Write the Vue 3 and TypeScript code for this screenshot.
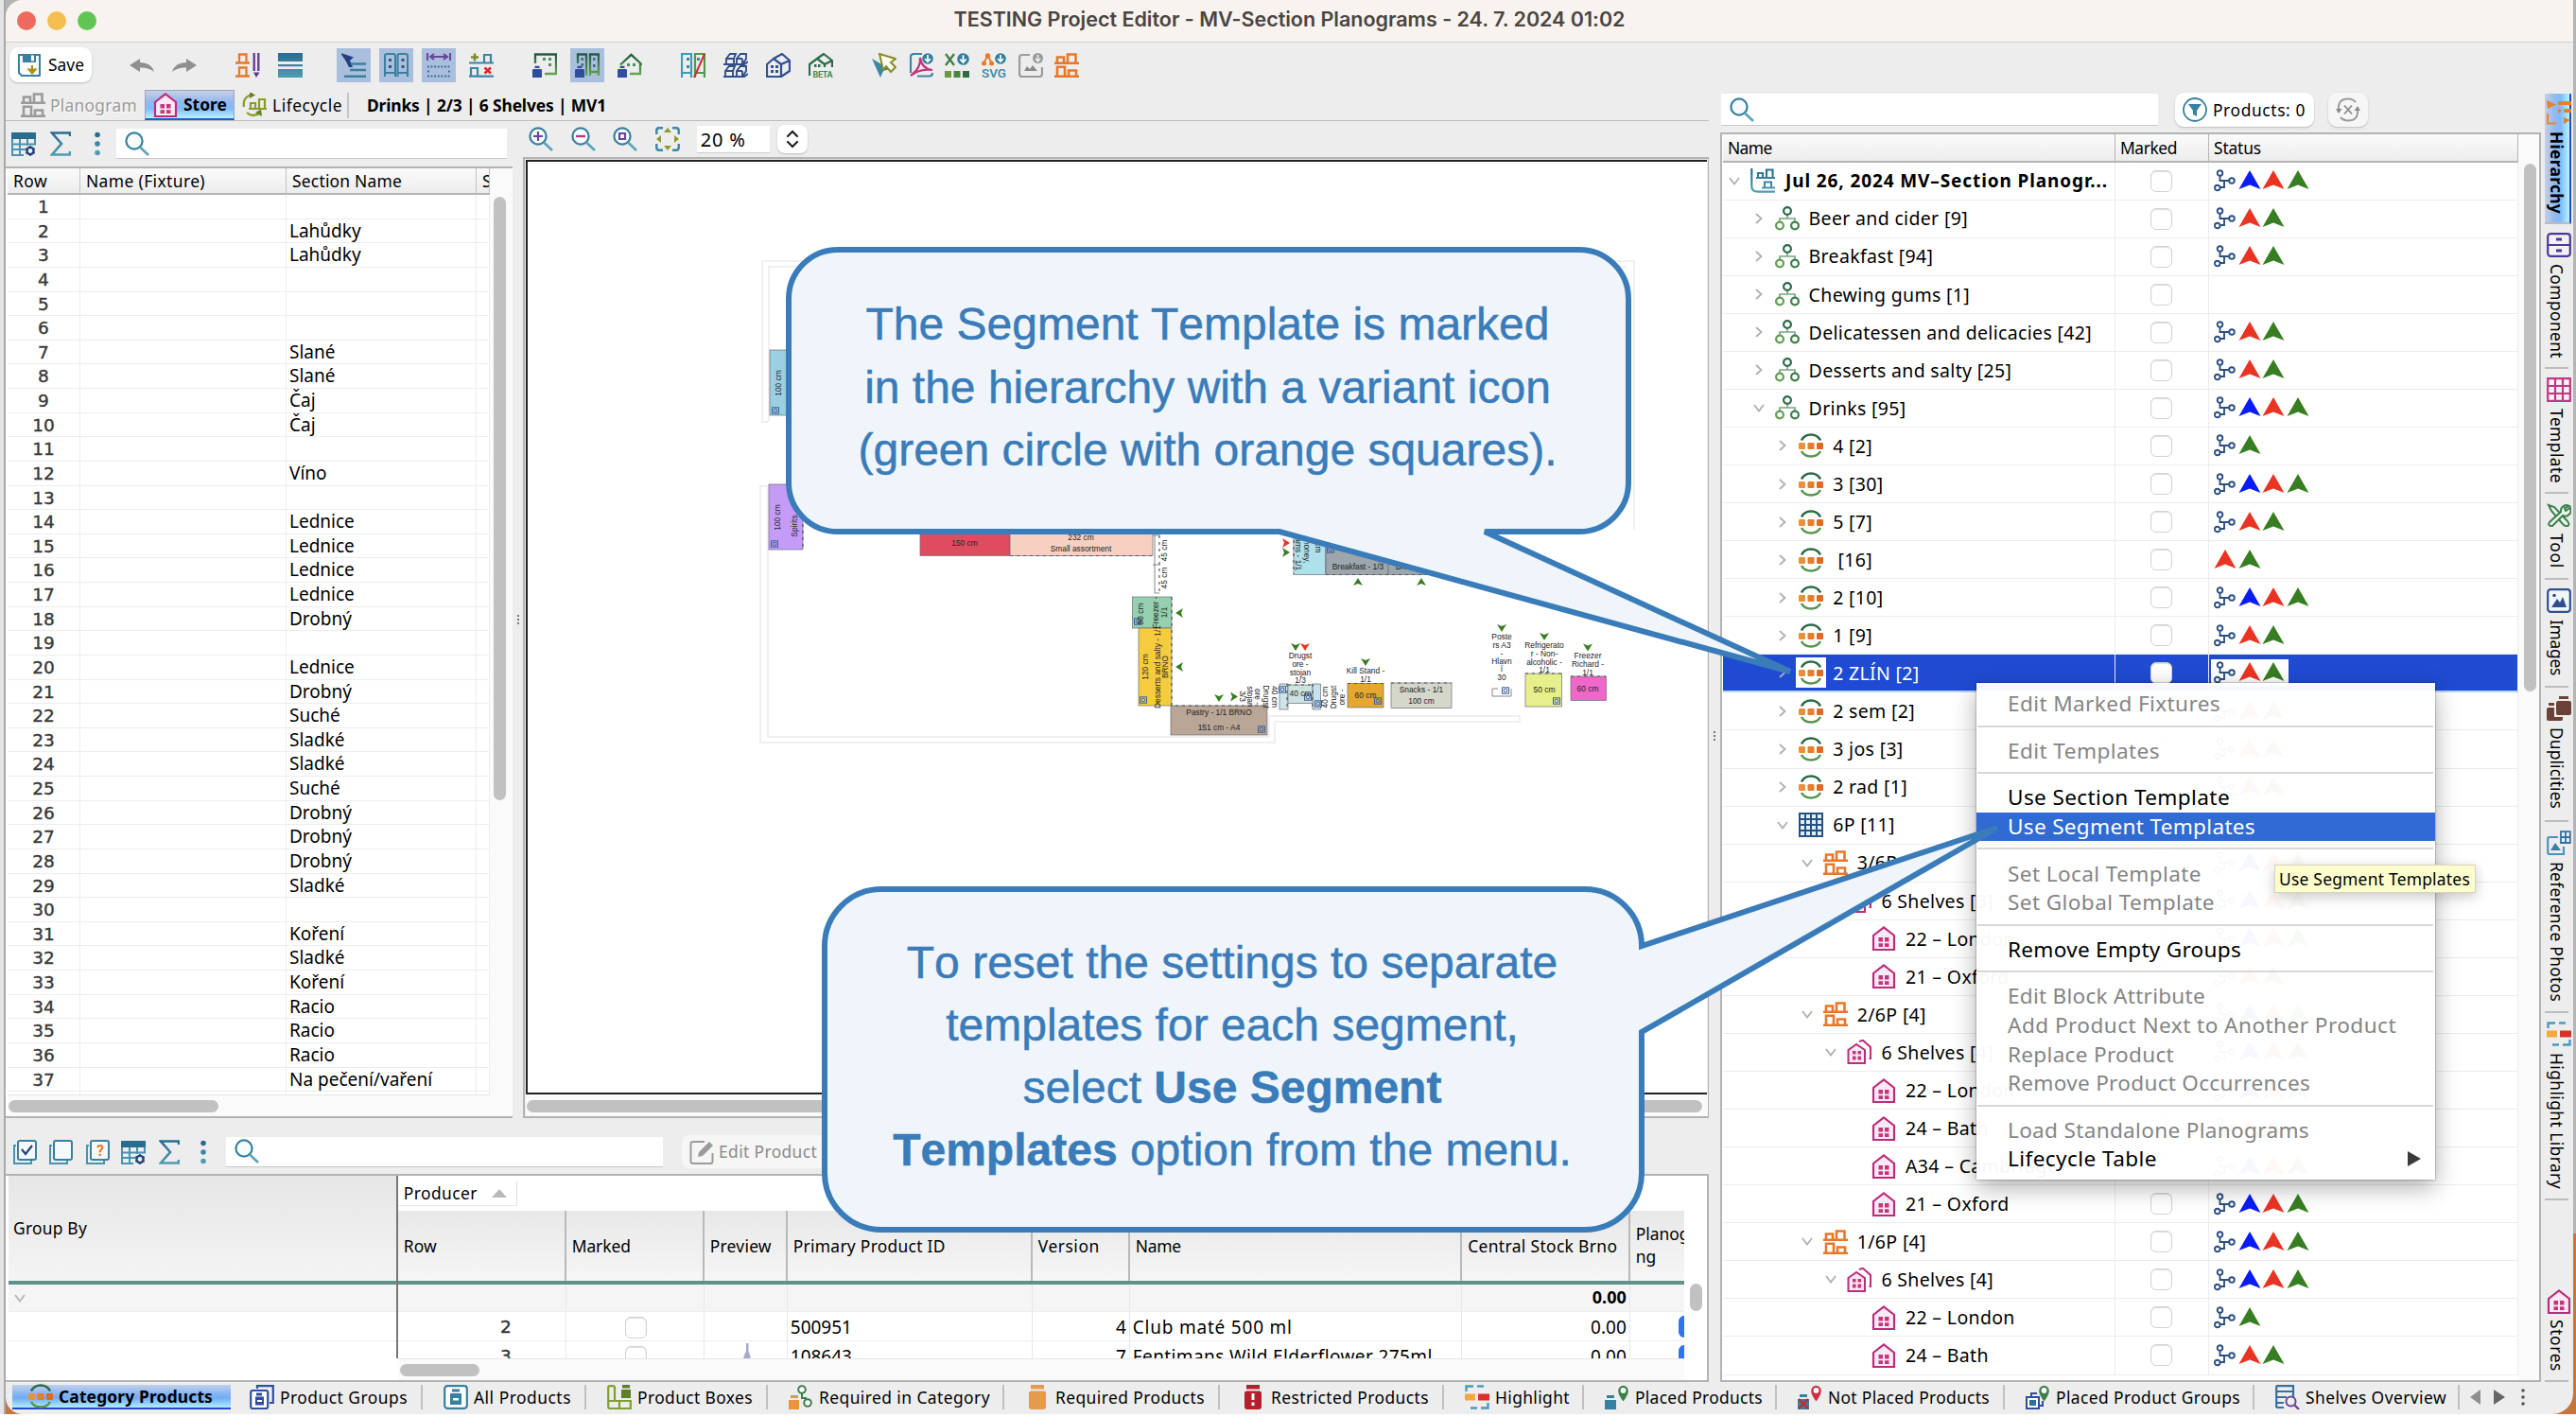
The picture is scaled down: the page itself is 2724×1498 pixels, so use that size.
<script setup lang="ts">
interface TreeRow { level: number; icon: string; text: string; open?: boolean; status: string; bold?: boolean; selected?: boolean }
interface Tab { icon: string; text: string; width: number; textWidth: number; active?: boolean }

// Spreads letters so that a label takes the width the design gives it.
const vFit = {
  mounted(el: HTMLElement, binding: { value: number }) {
    const box = el.getBoundingClientRect()
    const size = Math.max(box.width, box.height)
    const count = (el.textContent ?? '').length
    if (count) el.style.letterSpacing = `${(binding.value - size) / count}px`
  },
}

const toolGroups: { icon: string; on?: boolean }[][] = [
  [{ icon: 'undo' }, { icon: 'redo' }],
  [{ icon: 'shelfedit' }, { icon: 'rows' }],
  [{ icon: 'cursorlist', on: true }, { icon: 'cabinets', on: true }, { icon: 'measure', on: true }, { icon: 'plusminus' }],
  [{ icon: 'bottleshelf' }, { icon: 'bottlecab', on: true }, { icon: 'bottlehouse' }],
  [{ icon: 'compare' }, { icon: 'boxes3d' }, { icon: 'house3d' }, { icon: 'beta' }],
  [{ icon: 'select' }, { icon: 'pdf' }, { icon: 'xls' }, { icon: 'svg' }, { icon: 'image' }, { icon: 'shelf' }],
]

const sections: Record<number, string> = {
  2: 'Lahůdky', 3: 'Lahůdky', 7: 'Slané', 8: 'Slané', 9: 'Čaj', 10: 'Čaj', 12: 'Víno', 14: 'Lednice', 15: 'Lednice',
  16: 'Lednice', 17: 'Lednice', 18: 'Drobný', 20: 'Lednice', 21: 'Drobný', 22: 'Suché', 23: 'Sladké', 24: 'Sladké',
  25: 'Suché', 26: 'Drobný', 27: 'Drobný', 28: 'Drobný', 29: 'Sladké', 31: 'Koření', 32: 'Sladké', 33: 'Koření',
  34: 'Racio', 35: 'Racio', 36: 'Racio', 37: 'Na pečení/vaření',
}

const tree: TreeRow[] = [
  { level: 0, icon: 'project', text: 'Jul 26, 2024 MV–Section Planogr...', open: true, status: 'tbrg', bold: true },
  { level: 1, icon: 'category', text: 'Beer and cider [9]', open: false, status: 'trg' },
  { level: 1, icon: 'category', text: 'Breakfast [94]', open: false, status: 'trg' },
  { level: 1, icon: 'category', text: 'Chewing gums [1]', open: false, status: '' },
  { level: 1, icon: 'category', text: 'Delicatessen and delicacies [42]', open: false, status: 'trg' },
  { level: 1, icon: 'category', text: 'Desserts and salty [25]', open: false, status: 'trg' },
  { level: 1, icon: 'category', text: 'Drinks [95]', open: true, status: 'tbrg' },
  { level: 2, icon: 'variant', text: '4 [2]', open: false, status: 'tg' },
  { level: 2, icon: 'variant', text: '3 [30]', open: false, status: 'tbrg' },
  { level: 2, icon: 'variant', text: '5 [7]', open: false, status: 'trg' },
  { level: 2, icon: 'variant', text: ' [16]', open: false, status: 'rg' },
  { level: 2, icon: 'variant', text: '2 [10]', open: false, status: 'tbrg' },
  { level: 2, icon: 'variant', text: '1 [9]', open: false, status: 'trg' },
  { level: 2, icon: 'variant', text: '2 ZLÍN [2]', open: false, status: 'trg', selected: true },
  { level: 2, icon: 'variant', text: '2 sem [2]', open: false, status: 'trg' },
  { level: 2, icon: 'variant', text: '3 jos [3]', open: false, status: 'trg' },
  { level: 2, icon: 'variant', text: '2 rad [1]', open: false, status: 'trg' },
  { level: 2, icon: 'grid', text: '6P [11]', open: true, status: 'tbrg' },
  { level: 3, icon: 'shelf', text: '3/6P [3]', open: true, status: 'tbrg' },
  { level: 4, icon: 'houses', text: '6 Shelves [3]', open: true, status: 'tbrg' },
  { level: 5, icon: 'house', text: '22 – London', status: 'tbrg' },
  { level: 5, icon: 'house', text: '21 – Oxford', status: 'trg' },
  { level: 3, icon: 'shelf', text: '2/6P [4]', open: true, status: 'tbrg' },
  { level: 4, icon: 'houses', text: '6 Shelves [4]', open: true, status: 'tbrg' },
  { level: 5, icon: 'house', text: '22 – London', status: 'tbrg' },
  { level: 5, icon: 'house', text: '24 – Bath', status: 'trg' },
  { level: 5, icon: 'house', text: 'A34 – Cambridge', status: 'tbrg' },
  { level: 5, icon: 'house', text: '21 – Oxford', status: 'tbrg' },
  { level: 3, icon: 'shelf', text: '1/6P [4]', open: true, status: 'tbrg' },
  { level: 4, icon: 'houses', text: '6 Shelves [4]', open: true, status: 'tbrg' },
  { level: 5, icon: 'house', text: '22 – London', status: 'tg' },
  { level: 5, icon: 'house', text: '24 – Bath', status: 'trg' },
]
const arrowColor: Record<string, string> = { b: '#0a1cf5', r: '#ea3423', g: '#377e22' }

const tabs: Tab[] = [
  { icon: 'variant', text: 'Category Products', width: 235, textWidth: 163, active: true },
  { icon: 'groups', text: 'Product Groups', width: 200, textWidth: 135 },
  { icon: 'product', text: 'All Products', width: 173, textWidth: 103 },
  { icon: 'pboxes', text: 'Product Boxes', width: 192, textWidth: 122 },
  { icon: 'reqcat', text: 'Required in Category', width: 250, textWidth: 181 },
  { icon: 'required', text: 'Required Products', width: 228, textWidth: 158 },
  { icon: 'restricted', text: 'Restricted Products', width: 237, textWidth: 167 },
  { icon: 'highlight', text: 'Highlight', width: 148, textWidth: 79 },
  { icon: 'placed', text: 'Placed Products', width: 204, textWidth: 135 },
  { icon: 'notplaced', text: 'Not Placed Products', width: 241, textWidth: 171 },
  { icon: 'placedgroups', text: 'Placed Product Groups', width: 264, textWidth: 195 },
  { icon: 'overview', text: 'Shelves Overview', width: 217, textWidth: 149 },
]

const sideTabs: Tab[] = [
  { icon: 'hierarchy', text: 'Hierarchy', width: 138, textWidth: 87, active: true },
  { icon: 'component', text: 'Component', width: 153, textWidth: 100 },
  { icon: 'template', text: 'Template', width: 132, textWidth: 79 },
  { icon: 'tool', text: 'Tool', width: 91, textWidth: 37 },
  { icon: 'images', text: 'Images', width: 114, textWidth: 59 },
  { icon: 'dup', text: 'Duplicities', width: 142, textWidth: 86 },
  { icon: 'photos', text: 'Reference Photos', width: 202, textWidth: 148 },
  { icon: 'highlight', text: 'Highlight Library', width: 198, textWidth: 144 },
]

const menu: { text?: string; w?: number; state?: string }[] = [
  { text: 'Edit Marked Fixtures', w: 225, state: 'off' }, {},
  { text: 'Edit Templates', w: 161, state: 'off' }, {},
  { text: 'Use Section Template', w: 235 }, { text: 'Use Segment Templates', w: 262, state: 'hot' }, {},
  { text: 'Set Local Template', w: 205, state: 'off' }, { text: 'Set Global Template', w: 219, state: 'off' }, {},
  { text: 'Remove Empty Groups', w: 247 }, {},
  { text: 'Edit Block Attribute', w: 209, state: 'off' }, { text: 'Add Product Next to Another Product', w: 411, state: 'off' },
  { text: 'Replace Product', w: 176, state: 'off' }, { text: 'Remove Product Occurrences', w: 320, state: 'off' }, {},
  { text: 'Load Standalone Planograms', w: 319, state: 'off' }, { text: 'Lifecycle Table', w: 158, state: 'sub' },
]

// Store floor plan: fixtures, labels (x, y, text, rotation) and direction arrows (x, y, rotation, colour).
const fixtures: [number, number, number, number, string][] = [
  [814, 370, 40, 69, '#9bd0e3'], [813, 512, 36, 69, '#c49cf8'], [973, 550, 95, 37.5, '#df4c60'], [1068, 550, 151, 37.5, '#f8d0c1'],
  [1197.5, 631, 41.5, 33, '#95d1b0'], [1204, 664, 35, 82, '#f6cc3f'], [1238, 746, 102, 31, '#b9a696'],
  [1353, 723, 9, 27, '#cfe6e8'], [1388, 723, 8.5, 27, '#c6e2ea'], [1362, 724, 26, 19.5, '#cbe2de'],
  [1425, 722.5, 38, 25.5, '#e5a72f'], [1471, 722, 64, 26.5, '#d6d7cb'], [1613, 712, 38.5, 35, '#e6ef8c'], [1661, 715, 37.5, 25.5, '#ef68c9'],
  [1368, 550, 33.5, 57.5, '#afe1ea'], [1402, 550, 66, 57.5, '#9da6ad'], [1468, 550, 66, 57.5, '#9da6ad'],
]
const labels: [number, number, string, number][] = [
  [823, 405, '100 cm', -90], [822, 547, '100 cm', -90], [840, 556, 'Spirits', -90], [1020, 574.5, '150 cm', 0], [1143, 568, '232 cm', 0],
  [1143, 580, 'Small assortment', 0], [1231, 582, '45 cm', -90], [1231, 611, '45 cm', -90], [1206, 649, '80 cm', -90],
  [1222, 647.5, 'Freezer -', -90], [1231, 647.5, '1/1', -90], [1211, 705, '120 cm', -90], [1224, 705, 'Desserts and salty - 1/1', -90],
  [1232.5, 705, 'BRNO', -90], [1289, 753.5, 'Pastry - 1/1 BRNO', 0], [1289, 769.5, '151 cm - A4', 0],
  [1314, 736, '3/3', 90], [1322, 736.5, 'stojan', 90], [1330, 736.5, 'ore -', 90], [1339, 736.5, 'Drugst', 90], [1348, 736.5, '40 cm', 90],
  [1401, 737, '40 cm', -90], [1410, 737, 'Drugst', -90], [1419, 737, 'ore -', -90], [1375, 733.5, '40 cm', 0],
  [1375, 693.5, 'Drugst', 0], [1375, 702.5, 'ore -', 0], [1375, 711, 'stojan', 0], [1375, 719.5, '1/3', 0],
  [1444, 709.5, 'Kill Stand -', 0], [1444, 718.5, '1/1', 0], [1444, 735, '60 cm', 0], [1503, 729, 'Snacks - 1/1', 0], [1503, 741.5, '100 cm', 0],
  [1588, 673.5, 'Poste', 0], [1588, 682.5, 'rs A3', 0], [1588, 691, '-', 0], [1588, 699, 'Hlavn', 0], [1588, 707.5, 'í', 0], [1588, 716.5, '30', 0],
  [1633, 682.5, 'Refrigerato', 0], [1633, 691.5, 'r - Non-', 0], [1633, 700, 'alcoholic -', 0], [1633, 708, '1/1', 0], [1633, 729.5, '50 cm', 0],
  [1679, 693.5, 'Freezer', 0], [1679, 702.5, 'Richard -', 0], [1679, 711, '1/1', 0], [1679, 728, '60 cm', 0],
  [1436, 599.5, 'Breakfast - 1/3', 0], [1503, 599.5, 'Breakfast - 2/3', 0], [1373, 580, 'creams - 1/1', 90], [1382, 583, 'honey,', 90], [1394, 573, '90 cm', 90],
]
const arrows: [number, number, number, string][] = [
  [1247, 648, -90, 'g'], [1247, 705, -90, 'g'], [1289, 738, 180, 'g'], [1305, 736.5, 90, 'g'], [1370, 684, 180, 'g'], [1380, 684, 180, 'r'],
  [1444, 700, 180, 'g'], [1588, 664, 180, 'g'], [1633, 673, 180, 'g'], [1679, 684.5, 180, 'g'], [1360, 574, 90, 'r'], [1360, 584, 90, 'g'],
  [1436, 615, 0, 'g'], [1503, 615, 0, 'g'],
]
const badges: [number, number][] = [[820, 434], [819, 575], [1203, 657], [1209, 740], [1334, 771], [1356, 729], [1383, 737], [1394, 744], [1457, 741], [1592, 730], [1646, 741], [1407, 581]]
const dashes = ['M1068 587.5H1219', 'M1239 631V746H1340', 'M849 512V581', 'M1362 724H1388', 'M1425 722.5H1463', 'M1471 722H1535', 'M1613 712H1651', 'M1661 715H1698', 'M1368 550V607', 'M1402 607.5H1534', 'M1226 566V626', 'M1361 723V750', 'M1388 723V750']
</script>

<template>
  <div class="desktop">
    <svg class="defs" width="0" height="0">
      <defs>
        <linearGradient id="gt" x1="0" y1="0" x2="0" y2="1"><stop offset="0" stop-color="#2a6c90" /><stop offset="1" stop-color="#4f9cb0" /></linearGradient>
        <linearGradient id="gg" x1="0" y1="0" x2="0" y2="1"><stop offset="0" stop-color="#215a41" /><stop offset="1" stop-color="#63a551" /></linearGradient>
      </defs>
      <symbol id="i-save" viewBox="0 0 26 26"><path d="M2 2H24V24H5L2 21Z" fill="#f7fbfd" stroke="#37809f" stroke-width="2" stroke-linejoin="round" /><path d="M6 1h14v9H6z" fill="#37809f" /><path d="M15 2.5h3v6h-3z" fill="#fff" /><path d="M16 13v8M12.500 17.500l3.500 4 3.500-4z" stroke="#a8921b" fill="#a8921b" stroke-width="2" /></symbol>
      <symbol id="i-undo" viewBox="0 0 26 26"><path d="M0 13L11 6V10Q23 10 26 20Q20 15 11 15.500V20Z" fill="#8f8f8f" /></symbol>
      <symbol id="i-redo" viewBox="0 0 26 26"><path d="M26 13L15 6V10Q3 10 0 20Q6 15 15 15.500V20Z" fill="#8f8f8f" /></symbol>
      <symbol id="i-shelf" viewBox="0 0 26 26"><g fill="none" stroke="currentColor" stroke-width="2.600"><path d="M0 10.700H26M0 24.700H26M3 10V4.500H10V10M14 10V1.500H22.500V10M3 24V14.800H11V24M15 24V18.500H23V24" /></g></symbol>
      <symbol id="i-shelfedit" viewBox="0 0 26 26"><g fill="none" stroke="#e7792c" stroke-width="2.300"><path d="M0 10.500H15M0 24.500H15M4 10V1.500H11.500V10M4 24V15.500H11.500V24" /></g><path d="M18.500 0h2.500v19h-2.500zM23 0h2.500v19H23z" fill="#6a4599" /><path d="M19 20.500h6.500L22 26z" fill="#5b3a92" /></symbol>
      <symbol id="i-rows" viewBox="0 0 26 26"><path d="M0 0h26v9H0zM0 12h26v2.200H0zM0 17h26v9H0z" fill="url(#gt)" /></symbol>
      <symbol id="i-cursorlist" viewBox="0 0 26 26"><path d="M-1 0L13 4.500L9 8L12 15H8L5 9Z" fill="#243f85" /><path d="M10 11.500H26M9 18H26M3 24.700H26" stroke="#3a7f9e" stroke-width="2.400" /></symbol>
      <symbol id="i-cabinets" viewBox="0 0 26 26"><g fill="none" stroke="#3b7f9f" stroke-width="2"><path d="M1 25V3Q1 1 3 1H10Q12 1 12 3V25M1 21H12M14.500 25V3Q14.500 1 16.500 1H23Q25 1 25 3V25M14.500 21H25" /></g><path d="M5 6h3v3H5zM5 13h3v3H5zM18.500 6h3v3h-3zM18.500 13h3v3h-3z" fill="#2a5b7f" /></symbol>
      <symbol id="i-measure" viewBox="0 0 26 26"><path d="M1 0V8M25 0V8M4 4H22M8 1L4 4L8 7M18 1L22 4L18 7" fill="none" stroke="#6a4599" stroke-width="2" /><path d="M1 14.500H26M1 24.500H26M1 19.500H3M23 19.500H25" stroke="#36658a" stroke-width="1.800" stroke-dasharray="1.800 1.800" /></symbol>
      <symbol id="i-plusminus" viewBox="0 0 26 26"><path d="M0 10.500H26M0 24.700H26M16 10V2H23V10M2 24V16H9V24" fill="none" stroke="#3b86a4" stroke-width="2.200" /><path d="M2 4.500H10M6 .5V8.500" stroke="#7c8b22" stroke-width="2.400" /><path d="M16.500 15.500L23 21.500M23 15.500L16.500 21.500" stroke="#d9272e" stroke-width="2.600" /></symbol>
      <symbol id="i-bottle" viewBox="0 0 12 13"><path d="M2.500 0h5v2.500h-5zM0 4.500Q0 3.500 1.500 3.500H8.500Q10 3.500 10 4.500V12Q10 13 9 13H1Q0 13 0 12Z" fill="#2f4f9e" /></symbol>
      <symbol id="i-bottleshelf" viewBox="0 0 26 26"><path d="M3 11V1.500H25V22H13" fill="none" stroke="url(#gg)" stroke-width="2.300" /><path d="M11 5h3v3h-3zM17 5h3v3h-3zM17 11h3v3h-3z" fill="#4f8f5a" /><use href="#i-bottle" x="0" y="13.500" width="12" height="13" /></symbol>
      <symbol id="i-bottlecab" viewBox="0 0 26 26"><path d="M3 11V1.500H12V24M16 24V1.500H25V24M16 20H25" fill="none" stroke="url(#gg)" stroke-width="2.300" /><path d="M6.500 5h2.500v3H6.500zM6.500 11h2.500v3H6.500zM19 5h2.500v3H19zM19 12h2.500v3H19z" fill="#3f6f7a" /><use href="#i-bottle" x="0" y="13.500" width="12" height="13" /></symbol>
      <symbol id="i-bottlehouse" viewBox="0 0 26 26"><path d="M3 12.500L14.500 1.800L26 12.500M24 11V22H13" fill="none" stroke="url(#gg)" stroke-width="2.300" /><path d="M10 11h3v3h-3zM16 11h3v3h-3z" fill="#4f8f5a" /><use href="#i-bottle" x="0" y="13.500" width="12" height="13" /></symbol>
      <symbol id="i-compare" viewBox="0 0 26 26"><path d="M1 26V1H11V26M1 21H11" fill="none" stroke="#3b9ab8" stroke-width="2.200" /><path d="M15 26V1H25V26M15 21H25" fill="none" stroke="#4f9a4a" stroke-width="2.200" /><path d="M6 5h3v3H6zM6 13h3v3H6zM17 5h3v3h-3z" fill="#3b86a4" /><path d="M14 26L25 1" stroke="#d9272e" stroke-width="2" /></symbol>
      <symbol id="i-boxes3d" viewBox="0 0 26 26"><g fill="none" stroke="#2f4f86" stroke-width="1.900"><path d="M0 12H22L26 9M0 25H22L26 22M3 11V6L7 1H13L11 6V11M3 6H11M14 11V6L18 1H24V6L21 11M14 6H20M2 24V19L6 14H12L10 19V24M2 19H10M14 24V19L18 14H24V19L21 24M14 19H20M20 6V11M20 19V24" /></g></symbol>
      <symbol id="i-house3d" viewBox="0 0 26 26"><path d="M1 12L8 6L16 12V25H1ZM8 6L17 1L25 8V19L16 25M16 12L25 8" fill="none" stroke="#2f4f8f" stroke-width="2.200" stroke-linejoin="round" /><path d="M5 13h3v3H5zM10 13h3v3h-3zM5 18h3v3H5zM10 18h3v3h-3z" fill="#2f4f8f" /></symbol>
      <symbol id="i-beta" viewBox="0 0 26 26"><path d="M1 24V12L9 6L17 12V15M9 6L16 1L25 8V15M17 12L25 8" fill="none" stroke="#2b6b4a" stroke-width="2.200" stroke-linejoin="round" /><path d="M6 12h2.500v3H6zM10 12h2.500v3H10z" fill="#2b6b4a" /><text x="4.500" y="26" font-family="Roboto" font-weight="700" font-size="9" textLength="21" fill="#3f8a55">BETA</text></symbol>
      <symbol id="i-select" viewBox="0 0 26 26"><path d="M0 6L9 26L12 19L19 17Z" fill="#3b86a4" /><path d="M8 1L25 6L20 10L25 15L20 20L15 14L12 18Z" fill="#fafaf0" stroke="#8b8b22" stroke-width="2" /></symbol>
      <symbol id="i-pdf" viewBox="0 0 26 26"><path d="M2 21V4Q2 1 6 1H14" fill="none" stroke="#3b86a4" stroke-width="2.200" /><path d="M9 24.500H22Q25 24.500 25 21" fill="none" stroke="#3b86a4" stroke-width="2.200" /><path d="M2 24Q13 16 12 5Q14 17 25 18Q12 16 2 24" fill="none" stroke="#c2367f" stroke-width="2.200" /><use href="#i-down" x="14" y="0" width="12" height="12" /></symbol>
      <symbol id="i-down" viewBox="0 0 12 12"><circle cx="6" cy="6" r="5.800" fill="#2f7d9c" /><path d="M6 2V9M3 6L6 9.300L9 6" stroke="#fff" stroke-width="1.700" fill="none" /></symbol>
      <symbol id="i-xls" viewBox="0 0 26 26"><path d="M1 1L10 13M10 1L1 13" stroke="#3f7f45" stroke-width="2.300" /><use href="#i-down" x="13" y="0" width="13" height="13" /><path d="M0 19h7v7H0z" fill="#6a9a3a" /><path d="M9.500 19h7v7h-7z" fill="#4a8444" /><path d="M19 19h7v7h-7z" fill="#2f6a45" /></symbol>
      <symbol id="i-svg" viewBox="0 0 26 26"><path d="M2 11L6.500 3L11 11" fill="none" stroke="#e7792c" stroke-width="1.800" /><circle cx="6.500" cy="3" r="2.700" fill="#e7792c" /><circle cx="2.500" cy="11" r="2.500" fill="#e7792c" /><circle cx="10.500" cy="11" r="2.500" fill="#e7792c" /><use href="#i-down" x="14" y="0" width="12" height="12" /><text x="0" y="26" font-family="Roboto" font-weight="500" font-size="13.500" textLength="26" lengthAdjust="spacingAndGlyphs" fill="#3b86a4">SVG</text></symbol>
      <symbol id="i-image" viewBox="0 0 26 26"><path d="M12 2H4Q1 2 1 5V22Q1 25 4 25H22Q25 25 25 22V15" fill="none" stroke="#9b9b9b" stroke-width="2.200" /><path d="M6 19L9 14L12 17L15 13L20 19Z" fill="#8a8a8a" /><circle cx="20.500" cy="5.500" r="5.500" fill="#9b9b9b" /><path d="M20.500 2V8.500M18 6L20.500 8.800L23 6" stroke="#eee" stroke-width="1.500" fill="none" /></symbol>
      <symbol id="i-house" viewBox="0 0 26 26"><path d="M2 25V10L13 1.500L24 10V25Z" fill="#fbeaf3" stroke="#bb2d7b" stroke-width="2.200" /><path d="M7.500 12h4.500v4.500H7.500zM14 12h4.500v4.500H14zM7.500 18.300h4.500v3.800H7.500zM14 18.300h4.500v3.800H14z" fill="#c2367f" /></symbol>
      <symbol id="i-houses" viewBox="0 0 26 26"><path d="M1.500 25V11L10 5L19 11V25Z" fill="#fbeaf3" stroke="#bb2d7b" stroke-width="2" /><path d="M13 2L17 .8L25 8V20H23.500" fill="none" stroke="#bb2d7b" stroke-width="2" /><path d="M6 12h3.500v3.500H6zM11.500 12h3.500v3.500h-3.500zM6 17.500h3.500v4H6zM11.500 17.500h3.500v4h-3.500z" fill="#c2367f" /></symbol>
      <symbol id="i-lifecycle" viewBox="0 0 26 26"><g fill="none" stroke="#8b9b2a" stroke-width="2.200"><path d="M2 15Q0 5 10 2M5 21Q11 27 20 21M7 17H26M9 17V11H14V17M18 17V7H24V17" /></g><path d="M8 -1L14 2.500L8 6zM20 17.500L21 25L14 21z" fill="#6a7f22" /></symbol>
      <symbol id="i-table" viewBox="0 0 26 26"><path d="M0 1H26V8H0Z" fill="#2a6c90" /><path d="M1 8V25H13M1 13.500H26M1 19H15M9 8V25M17 8V15M25 8V14" fill="none" stroke="#4a93ad" stroke-width="2" /><circle cx="20" cy="20.500" r="3.600" fill="none" stroke="#24407a" stroke-width="2.400" /><path d="M20 15V26M15.200 17.800L24.800 23.200M24.800 17.800L15.200 23.200" stroke="#24407a" stroke-width="1.500" stroke-dasharray="2.200 6.600" /></symbol>
      <symbol id="i-sigma" viewBox="0 0 22 26"><path d="M21 5V1.500H2L12 13L2 24.500H21V21" fill="none" stroke="url(#gt)" stroke-width="2.600" /></symbol>
      <symbol id="i-dots" viewBox="0 0 6 26"><circle cx="3" cy="3.500" r="2.800" fill="#2a6c90" /><circle cx="3" cy="13" r="2.800" fill="#3b86a4" /><circle cx="3" cy="22.500" r="2.800" fill="#4f9cb0" /></symbol>
      <symbol id="i-search" viewBox="0 0 26 26"><circle cx="10" cy="10" r="8.600" fill="#f6fbfd" stroke="#37809f" stroke-width="2.200" /><path d="M16 16.500L25 25" stroke="#5aa3bb" stroke-width="2.600" /></symbol>
      <symbol id="i-zin" viewBox="0 0 26 26"><use href="#i-search" width="26" height="26" /><path d="M10 5V15M5 10H15" stroke="#6a4599" stroke-width="2.200" /></symbol>
      <symbol id="i-zout" viewBox="0 0 26 26"><use href="#i-search" width="26" height="26" /><path d="M5 10H15" stroke="#c2367f" stroke-width="2.400" /></symbol>
      <symbol id="i-zsq" viewBox="0 0 26 26"><use href="#i-search" width="26" height="26" /><path d="M7 7h6v6H7z" fill="none" stroke="#6a4599" stroke-width="2.200" /></symbol>
      <symbol id="i-fit" viewBox="0 0 26 26"><path d="M8 1.300H4Q1.300 1.300 1.300 4V8M18 1.300H22Q24.700 1.300 24.700 4V8M1.300 18V22Q1.300 24.700 4 24.700H8M24.700 18V22Q24.700 24.700 22 24.700H18" fill="none" stroke="#3b86a4" stroke-width="2.400" /><path d="M13 1l4 5h-8zM13 25l4-5h-8zM1 13l5-4v8zM25 13l-5-4v8z" fill="#8b9b2a" /></symbol>
      <symbol id="i-mcheck" viewBox="0 0 26 26"><path d="M4 6H2V25H20V22" fill="none" stroke="#4a93ad" stroke-width="2" /><rect x="6" y="1" width="19" height="20" rx="2" fill="#f4fafc" stroke="#37809f" stroke-width="2" /><path d="M10 10L14 15L21 6" fill="none" stroke="#24407a" stroke-width="2.200" /></symbol>
      <symbol id="i-mempty" viewBox="0 0 26 26"><path d="M4 6H2V25H20V22" fill="none" stroke="#4a93ad" stroke-width="2" /><rect x="6" y="1" width="19" height="20" rx="2" fill="#f4fafc" stroke="#37809f" stroke-width="2" /></symbol>
      <symbol id="i-mask" viewBox="0 0 26 26"><use href="#i-mempty" width="26" height="26" /><text x="12" y="17" font-family="Roboto" font-weight="700" font-size="16" fill="#e7792c">?</text></symbol>
      <symbol id="i-edit" viewBox="0 0 26 26"><path d="M16 2H4Q1.500 2 1.500 4V23Q1.500 25 4 25H22Q24.500 25 24.500 23V14" fill="none" stroke="#9b9b9b" stroke-width="2" /><path d="M9 18L10 13L21 2L25 6L14 17Z" fill="#9b9b9b" /></symbol>
      <symbol id="i-funnel" viewBox="0 0 26 26"><circle cx="13" cy="13" r="12" fill="#fff" stroke="#37809f" stroke-width="1.800" /><path d="M6 7H20L15 14V20L11 18V14Z" fill="#37809f" /></symbol>
      <symbol id="i-reset" viewBox="0 0 26 26"><path d="M3 13Q2 1.500 13 1.500Q18 1.500 21 5M23 13Q24 24.500 13 24.500Q8 24.500 5 21" fill="none" stroke="#9b9b9b" stroke-width="2" /><path d="M9 8.500L17 17.500M17 8.500L9 17.500" stroke="#8a8a8a" stroke-width="1.800" /><path d="M0 12h6.500L3 17zM19.500 14H26L23 9z" fill="#8a8a8a" /></symbol>
      <symbol id="i-project" viewBox="0 0 26 26"><path d="M1.300 0V19Q1.300 24.700 8 24.700H26M6 10H26M8 10V5H13V10M17 10V1.500H23.500V10M12 20.500H26M15 20V14.500H22V20" fill="none" stroke="url(#gt)" stroke-width="2.200" /></symbol>
      <symbol id="i-category" viewBox="0 0 26 26"><g fill="#fff" stroke-width="2.200"><path d="M13 8V13M5 17V13H21V17" stroke="#7da487" fill="none" stroke-width="1.700" /><circle cx="13" cy="5" r="3.900" stroke="#2b6b4a" /><circle cx="5" cy="20.500" r="3.900" stroke="#5f9f50" /><circle cx="21" cy="20.500" r="3.900" stroke="#3d7f4a" /></g></symbol>
      <symbol id="i-variant" viewBox="0 0 26 26"><path d="M3 7.500Q6 1.500 13 1.500Q20 1.500 23 7.500" fill="none" stroke="#2a6a47" stroke-width="2.600" /><path d="M3 19Q6 24.500 13 24.500Q20 24.500 23 19" fill="none" stroke="#55954d" stroke-width="2.600" /><rect x="0" y="10" width="7" height="7" rx="1.200" fill="#eb8f38" /><rect x="9.500" y="10" width="7" height="7" rx="1.200" fill="#e47d2d" /><rect x="19" y="10" width="7" height="7" rx="1.200" fill="#dc6b25" /></symbol>
      <symbol id="i-grid" viewBox="0 0 26 26"><rect width="26" height="26" fill="#27527f" /><path d="M2 2h4v4H2zM8 2h4v4H8zM14 2h4v4h-4zM20 2h4v4h-4zM2 8h4v4H2zM8 8h4v4H8zM14 8h4v4h-4zM20 8h4v4h-4zM2 14h4v4H2zM8 14h4v4H8zM14 14h4v4h-4zM20 14h4v4h-4zM2 20h4v4H2zM8 20h4v4H8zM14 20h4v4h-4zM20 20h4v4h-4z" fill="#dff0f9" /></symbol>
      <symbol id="i-branch" viewBox="0 0 23 24"><g fill="#fff" stroke="#2d4f80" stroke-width="1.900"><path d="M6.500 6V12H16M11 12V19H6" fill="none" /><circle cx="6.500" cy="4" r="2.800" /><circle cx="19" cy="12" r="2.800" /><circle cx="3.800" cy="19.500" r="2.800" /></g></symbol>
      <symbol id="i-arrow" viewBox="0 0 24 20"><path d="M12 0L23.500 20L12 15.500L.5 20Z" /></symbol>
      <symbol id="i-jar" viewBox="0 0 20 26"><path d="M3 0h14v4.500H3zM1 9Q1 6.500 3.500 6.500H16.500Q19 6.500 19 9V23Q19 26 16 26H4Q1 26 1 23Z" /></symbol>
      <symbol id="i-product" viewBox="0 0 26 26"><rect x="1.200" y="1.200" width="23.600" height="23.600" rx="3" fill="#fff" stroke="#37809f" stroke-width="2.200" /><path d="M9 4.500h8v3H9zM7 9h12v12H7z" fill="#37809f" /><path d="M10 14h6v2.500h-6z" fill="#fff" /></symbol>
      <symbol id="i-groups" viewBox="0 0 26 26"><path d="M8 4V1.200H24.800V19H21" fill="none" stroke="#2f4f9e" stroke-width="2.200" /><rect x="1.200" y="6" width="18" height="19" rx="2" fill="#fff" stroke="#2f4f9e" stroke-width="2.200" /><path d="M7 8.500h6v3H7zM6 12.500h9v9H6z" fill="#2f4f9e" /><path d="M8 16h5v2H8z" fill="#fff" /></symbol>
      <symbol id="i-pboxes" viewBox="0 0 26 26"><path d="M13 16V25H3Q1.200 25 1.200 23V3Q1.200 1.200 3 1.200H6Q8 1.200 8 3V17H24.800V25H13M1.200 17H8" fill="none" stroke="#7f9f2f" stroke-width="2.200" /><path d="M16 0h8v3.500h-8zM15 5h10v9H15z" fill="#5d7f2a" /></symbol>
      <symbol id="i-reqcat" viewBox="0 0 26 26"><path d="M2 11h8v3H2zM0 16h11v10H0z" fill="#e8953c" /><g fill="#fff" stroke="#3d7f4a" stroke-width="2"><path d="M14 8V14H19" fill="none" /><circle cx="14" cy="5" r="3.800" /><circle cx="20" cy="19" r="3.800" /></g></symbol>
      <symbol id="i-required" viewBox="0 0 26 26"><use href="#i-jar" x="3" width="20" height="26" fill="#e59a4f" /></symbol>
      <symbol id="i-restricted" viewBox="0 0 26 26"><use href="#i-jar" x="3" width="20" height="26" fill="#b3202c" /><path d="M11.500 9h3v7h-3zM11.500 18.500h3v3.500h-3z" fill="#fff" /></symbol>
      <symbol id="i-highlight" viewBox="0 0 26 26"><path d="M1.500 7V1.500H9M13 1.500H20M24.500 19V24.500H17M13 24.500H6" fill="none" stroke="#4a9abb" stroke-width="2.400" /><rect x="0" y="9.500" width="11" height="7" fill="#f0a93a" /><rect x="14" y="9.500" width="12" height="7" fill="#d9302a" /></symbol>
      <symbol id="i-pin" viewBox="0 0 12 17"><path d="M6 16.500Q1 10 1 5.800A5 5 0 0 1 11 5.800Q11 10 6 16.500Z" /><circle cx="6" cy="5.600" r="2.700" fill="#fff" /></symbol>
      <symbol id="i-placed" viewBox="0 0 26 26"><path d="M2 11h8v3H2zM0 16h12v10H0z" fill="#37809f" /><use href="#i-pin" x="13" width="13" height="18" fill="#3d7f4a" /></symbol>
      <symbol id="i-notplaced" viewBox="0 0 26 26"><path d="M2 10h8v3H2zM0 15h12v11H0z" fill="#37809f" /><path d="M1 15L11 25M11 15L1 25" stroke="#c22a35" stroke-width="2.400" /><use href="#i-pin" x="13" width="13" height="18" fill="#cf2f45" /></symbol>
      <symbol id="i-placedgroups" viewBox="0 0 26 26"><path d="M6 12V9H12M18 17V22H15" fill="none" stroke="#2f4f9e" stroke-width="2" /><rect x="1" y="13" width="13" height="12" fill="#fff" stroke="#2f4f9e" stroke-width="2" /><path d="M4 16h7v6H4z" fill="#2f6f9e" /><use href="#i-pin" x="13" width="13" height="18" fill="#3d7f4a" /></symbol>
      <symbol id="i-overview" viewBox="0 0 26 26"><path d="M1.200 24V2Q1.200 1.200 2 1.200H19V13M1.200 7H19M1.200 13H12M1.200 19H9M1.200 24H9" fill="none" stroke="#37709f" stroke-width="2.200" /><circle cx="16.500" cy="17.500" r="5" fill="#eee" stroke="#6a4599" stroke-width="2" /><path d="M20 21L25 26" stroke="#6a4599" stroke-width="2.400" /></symbol>
      <symbol id="i-hierarchy" viewBox="0 0 26 26"><path d="M1 14V24.500H10" fill="none" stroke="#e8892f" stroke-width="2.200" /><path d="M0 0l10 4.500L1 9zM12 1h14v4H12zM18 9h8v4h-8zM12 9l4 2-4 3zM18 18l7 3-7 4z" fill="#e5802b" /></symbol>
      <symbol id="i-component" viewBox="0 0 26 26"><rect x="1.200" y="1.200" width="23.600" height="23.600" rx="3" fill="#f4f1fa" stroke="#4b3a92" stroke-width="2.200" /><path d="M1 13H25" stroke="#4b3a92" stroke-width="2" /><path d="M10 5.500h6v3h-6zM10 17.500h6v3h-6z" fill="#4b3a92" /></symbol>
      <symbol id="i-template" viewBox="0 0 26 26"><path d="M1.200 1.200H24.800V24.800H1.200ZM9 1V25M17 1V25M1 9H25M1 17H25" fill="#fdf2f8" stroke="#c2367f" stroke-width="2.200" /></symbol>
      <symbol id="i-tool" viewBox="0 0 26 26"><path d="M2 3L8 5L22 20Q25 24 22 25Q20 26 17 23L5 9Z" fill="#eef6ee" stroke="#3d7f4a" stroke-width="2" /><path d="M24 4A6 6 0 0 0 15 10L3 21Q1 24 4 25L6 25L17 14A6 6 0 0 0 25 6L20 9L19 6Z" fill="#eef6ee" stroke="#3d7f4a" stroke-width="2" /></symbol>
      <symbol id="i-images" viewBox="0 0 26 26"><rect x="1.200" y="1.200" width="23.600" height="23.600" rx="3" fill="#f2f6fb" stroke="#2f4f8f" stroke-width="2.200" /><path d="M5 20L11 11L14 15L17 9L21 20Z" fill="#2f4f8f" /><circle cx="8" cy="7.500" r="1.800" fill="#2f4f8f" /></symbol>
      <symbol id="i-dup" viewBox="0 0 26 26"><path d="M13 0h10v3H13zM10 7Q10 5 12 5H24Q26 5 26 7V18Q26 20 24 20H12Q10 20 10 18ZM2 7h6v3H2zM0 14Q0 12 2 12H8V22H17V24Q17 26 15 26H2Q0 26 0 24Z" fill="#6a4238" /></symbol>
      <symbol id="i-photos" viewBox="0 0 26 26"><path d="M12 7H3Q1.200 7 1.200 9V23Q1.200 25 3 25H18V17" fill="none" stroke="#4a93bb" stroke-width="2.200" /><path d="M4 21L9 13L15 21Z" fill="#3b80a0" /><path d="M15 1.200H24.800V13H15ZM20 1V13M15 7H25" fill="#e6f3fa" stroke="#37709f" stroke-width="1.800" /></symbol>
    </svg>

    <div class="window">
      <header class="titlebar">
        <div class="lights"><i class="red" /><i class="amber" /><i class="green" /></div>
        <span v-fit="710" class="title">TESTING Project Editor - MV-Section Planograms - 24. 7. 2024 01:02</span>
      </header>

      <div class="main">
        <div class="work">
          <div class="toolbar">
            <button class="save"><svg class="ic"><use href="#i-save" /></svg><span v-fit="38">Save</span></button>
            <div v-for="(g, gi) in toolGroups" :key="gi" class="group" :class="{ tight: gi === 5 }">
              <span v-for="t in g" :key="t.icon" class="tool" :class="{ on: t.on }"><svg class="ic" :class="{ orange: t.icon === 'shelf' }"><use :href="'#i-' + t.icon" /></svg></span>
            </div>
          </div>

          <nav class="viewtabs">
            <span class="vt planogram"><svg class="ic"><use href="#i-shelf" /></svg><span v-fit="92">Planogram</span></span>
            <span class="vt store"><svg class="ic"><use href="#i-house" /></svg><span v-fit="46">Store</span></span>
            <span class="vt lifecycle"><svg class="ic"><use href="#i-lifecycle" /></svg><span v-fit="74">Lifecycle</span></span>
            <span class="crumb"><b v-fit="253">Drinks | 2/3 | 6 Shelves | MV1</b></span>
          </nav>

          <div class="upper">
            <section class="fixtures">
              <div class="findbar">
                <svg class="ic"><use href="#i-table" /></svg>
                <svg class="sg"><use href="#i-sigma" /></svg>
                <svg class="dt"><use href="#i-dots" /></svg>
                <div class="field"><svg class="ic"><use href="#i-search" /></svg></div>
              </div>
              <div class="frame">
                <div class="ftable">
                  <div class="frow fhead"><span><em v-fit="36">Row</em></span><span><em v-fit="126">Name (Fixture)</em></span><span><em v-fit="116">Section Name</em></span><span>S</span></div>
                  <div class="fbody">
                    <div v-for="n in 38" :key="n" class="frow"><span class="num">{{ n }}</span><span /><span>{{ sections[n] }}</span><span /></div>
                  </div>
                  <div class="hscroll"><i class="h1" /></div>
                </div>
                <div class="vscroll"><i class="v1" /></div>
              </div>
            </section>

            <div class="splitter"><i /><i /><i /></div>

            <section class="canvas">
              <div class="zoombar">
                <svg class="ic"><use href="#i-zin" /></svg><svg class="ic"><use href="#i-zout" /></svg><svg class="ic"><use href="#i-zsq" /></svg><svg class="ic"><use href="#i-fit" /></svg>
                <div class="percent"><span v-fit="48">20 %</span></div>
                <div class="stepper"><svg width="14" height="20" viewBox="0 0 14 20"><path d="M2 7L7 2L12 7M2 13L7 18L12 13" fill="none" stroke="#222" stroke-width="2.200" stroke-linecap="round" /></svg></div>
              </div>
              <div class="cframe">
                <svg class="plan" viewBox="558 171 1247 984">
                  <g fill="none" stroke="#ececec" stroke-width="1.500"><path d="M806 440V276H1728V560M813 445V282H1720M806 440V446H813M804 514V785H1348V763H1607V757H1342V779H812V514Z" /></g>
                  <rect v-for="(f, i) in fixtures" :key="'f' + i" :x="f[0]" :y="f[1]" :width="f[2]" :height="f[3]" :fill="f[4]" stroke="#6d6d78" stroke-width=".7" />
                  <path v-for="d in dashes" :key="d" :d="d" fill="none" stroke="#555" stroke-width="1.200" stroke-dasharray="3 4" />
                  <path d="M1221 565V627H1226M1219 566H1227M1219 597H1227M1578 736V728H1584M1578 736H1598V728" fill="none" stroke="#888" stroke-width="1" />
                  <g v-for="(b, i) in badges" :key="'b' + i" fill="none" stroke="#3d5f9c" stroke-width="1"><rect :x="b[0] - 3.500" :y="b[1] - 3.200" width="7" height="6.400" /><circle :cx="b[0]" :cy="b[1]" r="1.900" /></g>
                  <text v-for="(l, i) in labels" :key="'l' + i" :transform="`translate(${l[0]} ${l[1]}) rotate(${l[3]})`" text-anchor="middle" dy="2.900">{{ l[2] }}</text>
                  <g v-for="(a, i) in arrows" :key="'a' + i" :transform="`translate(${a[0]} ${a[1]}) rotate(${a[2]})`"><path d="M0 -4L5 4L0 2L-5 4Z" :fill="arrowColor[a[3]]" /></g>
                </svg>
                <div class="hscroll wide"><i class="h2" /></div>
              </div>
            </section>
          </div>

          <section class="products">
            <div class="pbar">
              <svg class="ic"><use href="#i-mcheck" /></svg><svg class="ic"><use href="#i-mempty" /></svg><svg class="ic"><use href="#i-mask" /></svg><svg class="ic"><use href="#i-table" /></svg>
              <svg class="sg"><use href="#i-sigma" /></svg><svg class="dt"><use href="#i-dots" /></svg>
              <div class="field"><svg class="ic"><use href="#i-search" /></svg></div>
              <div class="editbtn"><svg class="ic"><use href="#i-edit" /></svg><span v-fit="104">Edit Product</span></div>
            </div>
            <div class="pframe">
              <div class="gcol">
                <div class="ghead"><span v-fit="78">Group By</span></div>
                <div class="grow first"><svg width="12" height="9" viewBox="0 0 12 9"><path d="M1 1L6 7.500L11 1" fill="none" stroke="#b5b5b5" stroke-width="1.800" /></svg></div>
                <div class="grow" />
              </div>
              <div class="ptable">
                <div class="producer"><span class="pchip"><span v-fit="78">Producer</span><svg width="16" height="9"><path d="M0 9L8 0L16 9Z" fill="#b9b9b9" /></svg></span></div>
                <div class="prow phead"><span><em v-fit="35">Row</em></span><span><em v-fit="62">Marked</em></span><span><em v-fit="65">Preview</em></span><span><em v-fit="161">Primary Product ID</em></span><span><em v-fit="65">Version</em></span><span><em v-fit="48">Name</em></span><span><em v-fit="158">Central Stock Brno</em></span><span class="two">Planog<br>ng</span></div>
                <div class="pbody">
                  <div class="prow sum"><span /><span /><span /><span /><span /><span /><span class="r"><b>0.00</b></span><span /></div>
                  <div class="prow"><span class="n">2</span><span class="c"><i class="cb" /></span><span /><span>500951</span><span class="r">4</span><span><em v-fit="169">Club maté 500 ml</em></span><span class="r">0.00</span><span class="blue"><i /></span></div>
                  <div class="prow"><span class="n">3</span><span class="c"><i class="cb" /></span><span class="c"><svg class="bot" width="12" height="30"><path d="M5 0h2.500v8l2 6v16H2.500V14l2.500-6z" fill="#a7abc9" /></svg></span><span>108643</span><span class="r">7</span><span><em v-fit="317">Fentimans Wild Elderflower 275ml</em></span><span class="r">0.00</span><span class="blue"><i /></span></div>
                </div>
                <div class="ptrack"><i /></div>
              </div>
              <div class="vscroll low"><i /></div>
            </div>
          </section>
        </div>

        <div class="splitter right"><i /><i /><i /></div>

        <aside class="hier">
          <div class="hbar">
            <div class="field"><svg class="ic"><use href="#i-search" /></svg></div>
            <div class="btn prod"><svg class="ic"><use href="#i-funnel" /></svg><span v-fit="98">Products: 0</span></div>
            <div class="btn off"><svg class="ic"><use href="#i-reset" /></svg></div>
          </div>
          <div class="hframe">
            <div class="tree">
              <div class="trow thead"><span><em v-fit="48">Name</em></span><span><em v-fit="62">Marked</em></span><span><em v-fit="52">Status</em></span></div>
              <div v-for="(r, i) in tree" :key="i" class="trow" :class="{ sel: r.selected, bold: r.bold }">
                <span class="tname" :style="{ paddingLeft: r.level * 25.6 + 'px' }">
                  <span class="chev"><svg v-if="r.open === true" width="12" height="9" viewBox="0 0 12 9"><path d="M1 1L6 7.500L11 1" /></svg><svg v-else-if="r.open === false" width="8" height="12" viewBox="0 0 8 12"><path d="M1 1L6.500 6L1 11" /></svg></span>
                  <span class="tico"><svg class="ic" :class="{ orange: r.icon === 'shelf' }"><use :href="'#i-' + r.icon" /></svg></span>
                  <b v-if="r.bold" v-fit="341">{{ r.text }}</b><span v-else class="tt">{{ r.text }}</span>
                </span>
                <span class="c"><i class="cb" /></span>
                <span class="stat"><span class="sbox"><template v-for="s in r.status" :key="s"><svg v-if="s === 't'" class="br"><use href="#i-branch" /></svg><svg v-else class="ar" :fill="arrowColor[s]"><use href="#i-arrow" /></svg></template></span></span>
              </div>
            </div>
            <div class="vscroll hv"><i /></div>
          </div>
        </aside>

        <nav class="side">
          <div v-for="t in sideTabs" :key="t.text" class="stab" :class="{ active: t.active }" :style="{ height: t.width + 'px' }"><svg class="ic"><use :href="'#i-' + t.icon" /></svg><span v-fit="t.textWidth">{{ t.text }}</span></div>
          <div class="stab last"><svg class="ic"><use href="#i-house" /></svg><span v-fit="55">Stores</span></div>
        </nav>
      </div>

      <footer class="tabs">
        <div v-for="t in tabs" :key="t.text" class="tab" :class="{ active: t.active }" :style="{ width: t.width + 'px' }"><div class="tin"><svg class="ic"><use :href="'#i-' + t.icon" /></svg><span v-fit="t.textWidth">{{ t.text }}</span></div></div>
        <svg class="pager" width="70" height="20" viewBox="0 0 70 20"><path d="M12 2V18L1 10Z" fill="#8f8f8f" /><path d="M26 2V18L38 10Z" fill="#666" /><circle cx="57" cy="3" r="1.800" fill="#555" /><circle cx="57" cy="10" r="1.800" fill="#555" /><circle cx="57" cy="17" r="1.800" fill="#555" /></svg>
      </footer>
    </div>

    <div class="menu">
      <template v-for="(m, i) in menu" :key="i">
        <div v-if="m.text" class="mi" :class="m.state"><span v-fit="m.w">{{ m.text }}</span><svg v-if="m.state === 'sub'" width="14" height="16"><path d="M0 0L14 8L0 16Z" fill="#3a3a3a" /></svg></div>
        <div v-else class="ms" />
      </template>
    </div>
    <div class="tip"><span v-fit="202">Use Segment Templates</span></div>

    <svg class="bubbles" width="2724" height="1498">
      <g fill="#eff5fa" stroke="#3a7cb9" stroke-width="6" stroke-linejoin="miter">
        <path d="M886 264H1670A52 52 0 0 1 1722 316V510A52 52 0 0 1 1670 562H1570L1893 710L1353 562H886A52 52 0 0 1 834 510V316A52 52 0 0 1 886 264Z" />
        <path d="M932 940H1676A60 60 0 0 1 1736 1000L2112 875L1736 1091V1240A60 60 0 0 1 1676 1300H932A60 60 0 0 1 872 1240V1000A60 60 0 0 1 932 940Z" />
      </g>
    </svg>
    <div class="note one">The Segment Template is marked<br>in the hierarchy with a variant icon<br>(green circle with orange squares).</div>
    <div class="note two2">To reset the settings to separate<br>templates for each segment,<br>select <b>Use Segment</b><br><b>Templates</b> option from the menu.</div>
  </div>
</template>

<style>
html, body { margin: 0; overflow: hidden; background: #fff; }
</style>

<style scoped>
* { box-sizing: border-box; }
.desktop { position: relative; width: 2724px; height: 1498px; overflow: hidden; font: 17.4px/1.2 "Noto Sans", "Open Sans", sans-serif; color: #000; background: linear-gradient(#fff, #fff) 0 1495px / 100% 3px no-repeat, linear-gradient(90deg, #e4e4e6 4px, #a8a8a8 4px, #a8a8a8 6px, transparent 6px), linear-gradient(#b4b4b4 1304px, #c5753f 1304px); }
.desktop span, .desktop b, .desktop em { white-space: pre; font-style: normal; flex: none; }
.defs { position: absolute; }
.ic { width: 26px; height: 26px; flex: none; display: block; overflow: visible; }
.orange { color: #e5782b; }
.window { margin-left: 6px; width: 2715px; height: 1495px; background: #ededed; border-radius: 18px 0 22px 18px; overflow: hidden; display: flex; flex-direction: column; }
.titlebar { height: 45px; flex: none; background: #f8f3ef; border-bottom: 1px solid #d2d0ce; display: flex; justify-content: center; align-items: center; position: relative; }
.lights { position: absolute; left: 12px; top: 12px; display: flex; gap: 12px; }
.lights i { width: 20px; height: 20px; border-radius: 50%; }
.red { background: #ec6a5e; } .amber { background: #f4bf4f; } .green { background: #61c554; }
.title { font: 600 21.500px Inter, sans-serif; color: #4a4542; margin-top: -4px; }
.main { display: flex; height: 1416px; flex: none; }
.work { width: 1801px; flex: none; display: flex; flex-direction: column; }
.toolbar { height: 47px; flex: none; display: flex; align-items: center; padding-left: 4px; gap: 31px; }
.save { border: 0; width: 87px; height: 37px; background: #fff; border-radius: 9px; box-shadow: 0 1px 2px #bbb; font: inherit; display: flex; align-items: center; gap: 7px; padding: 0 0 0 8px; margin-right: 4px; }
.group { display: flex; gap: 9px; }
.group.tight { gap: 2.700px; }
.tool { width: 36px; height: 36px; display: flex; align-items: center; justify-content: center; }
.tool.on { background: #aabfde; }
.viewtabs { height: 36px; flex: none; display: flex; align-items: center; border-bottom: 1px solid #bdbdbd; padding: 3px 0 0 0; }
.vt { display: flex; align-items: center; gap: 5px; height: 32px; }
.planogram { width: 147px; padding-left: 16px; color: #9a9a9a; text-shadow: 1px 1px #fff; }
.store { width: 95px; padding-left: 8px; gap: 6px; font-weight: 700; border: 1px solid #9fa5b5; border-bottom: 2px solid #1c5bd8; background: linear-gradient(#c6d0e4, #93b8f1 40%, #7fbcfa 65%, #b9f2fc); }
.lifecycle { width: 121px; padding-left: 8px; gap: 6px; border-right: 2px solid #c5c5c5; height: 27px; }
.crumb { padding-left: 19px; }
.upper { height: 1054px; flex: none; display: flex; }
.fixtures { width: 536px; flex: none; }
.findbar { height: 48px; display: flex; align-items: center; padding: 0 0 0 6px; }
.sg { width: 22px; height: 26px; flex: none; margin: 0 25px 0 15px; }
.dt { width: 6px; height: 26px; flex: none; margin-right: 17px; }
.field { height: 32px; background: #fff; border-bottom: 1px solid #c9c9c9; display: flex; align-items: center; padding-left: 9px; flex: none; }
.findbar .field { width: 413px; }
.frame { height: 1006px; border: 2px solid #b3b3b3; border-left-width: 0; background: #fff; display: flex; }
.ftable { width: 510px; margin-left: 2px; }
.frow { display: grid; grid-template-columns: 77px 218px 201px 14px; height: 25.640px; border-bottom: 1px solid #ededed; font-size: 19px; line-height: 25px; }
.frow > span { border-right: 1px solid #ededed; padding-left: 3px; overflow: hidden; }
.fhead { height: 28px; border-bottom: 2px solid #b5b5b5; background: linear-gradient(#fbfbfb, #ececec); font-size: 17.400px; line-height: 26px; }
.fhead > span { border-color: #c2c2c2; padding-left: 6px; }
.frow .num { text-align: center; padding: 0; color: #3a3a3a; font-family: "DejaVu Sans", sans-serif; font-size: 18.500px; -webkit-text-stroke: .4px #3a3a3a; }
.fbody { height: 951px; overflow: hidden; }
.hscroll { height: 23px; background: #fafafa; border-top: 1px solid #e6e6e6; padding: 5px 0 0 1px; }
.hscroll i, .vscroll i, .ptrack i { display: block; background: #c1c1c1; border-radius: 7px; }
.h1 { width: 222px; height: 13px; }
.vscroll { width: 24px; background: #fafafa; flex: none; }
.v1 { width: 13px; height: 638px; margin: 30px 0 0 4px; }
.splitter { width: 11px; flex: none; display: flex; flex-direction: column; justify-content: center; align-items: center; gap: 2px; }
.splitter i { width: 2px; height: 2px; background: #777; }
.splitter.right { width: 12px; padding-top: 50px; }
.canvas { width: 1254px; flex: none; }
.zoombar { height: 38px; display: flex; align-items: center; gap: 18.700px; padding-left: 6px; }
.percent { width: 77px; height: 29px; background: #fff; border-bottom: 1px solid #ccc; margin-left: -1px; padding: 3px 0 0 4px; font-size: 20px; }
.stepper { width: 32px; height: 30px; background: #fff; border-radius: 8px; margin-left: -10px; box-shadow: 0 1px 2px #bbb; display: flex; align-items: center; justify-content: center; }
.cframe { height: 1016px; border: 2px solid #b3b3b3; border-right-width: 1px; padding: 1px 0 0 1px; }
.plan { display: block; width: 1249px; height: 988px; background: #fff; border: 2px solid #222; border-right: 0; font: 8.400px "Liberation Sans", Arial, sans-serif; }
.plan text { fill: #222; }
.wide { border: 0; padding-top: 6px; }
.h2 { width: 1243px; height: 13px; }
.products { height: 279px; }
.pbar { display: flex; align-items: center; height: 59px; padding: 12px 0 0 7px; gap: 12.300px; }
.pbar .sg { margin: 0 10px 0 2px; } .pbar .dt { margin-right: 8px; }
.pbar .field { width: 462px; }
.editbtn { width: 200px; height: 35px; border-radius: 8px; background: #f6f6f6; color: #8a8a8a; margin-left: 8px; padding-left: 8px; display: flex; gap: 5px; align-items: center; }
.pframe { height: 220px; border: 2px solid #b3b3b3; border-left: 0; background: #fff; display: flex; overflow: hidden; }
.gcol { width: 415px; padding-left: 3px; border-right: 2px solid #777; height: 193px; }
.ghead { height: 115px; border-bottom: 4px solid #629189; background: linear-gradient(#e6e6e6, #f4f4f4); display: flex; align-items: center; padding-left: 5px; }
.grow { height: 31px; border-bottom: 1px solid #ededed; }
.grow.first { background: #f5f5f6; height: 29px; padding: 2px 0 0 6px; }
.ptable { width: 1361px; overflow: hidden; }
.producer { height: 37px; display: flex; align-items: center; }
.pchip { width: 126px; height: 26px; display: flex; align-items: center; gap: 15px; padding-left: 6px; border-right: 1px solid #ddd; border-bottom: 1px solid #e8e8e8; }
.prow { display: grid; grid-template-columns: 178px 146px 88px 259px 103px 351.500px 177.500px 59px; height: 31px; border-bottom: 1px solid #ededed; font-size: 19px; line-height: 32px; }
.prow > span { border-right: 1px solid #e8e8e8; padding-left: 3px; position: relative; }
.phead { height: 78px; border-bottom: 4px solid #629189; background: linear-gradient(#e8e8e8, #f6f6f6); font-size: 17.400px; line-height: 74px; }
.phead > span { border-right: 2px solid #b9b9b9; padding-left: 6px; }
.phead .two { line-height: 24px; padding-top: 12px; }
.pbody { height: 78px; overflow: hidden; }
.sum { height: 29px; background: #f5f5f6; line-height: 26px; font-size: 18px; }
.prow .r { text-align: right; padding-right: 3px; }
.prow .n { text-align: right; padding-right: 57px; color: #333; font-family: "DejaVu Sans", sans-serif; font-size: 18.500px; -webkit-text-stroke: .4px #333; }
.c { display: flex; align-items: center; justify-content: center; }
.cb { width: 23px; height: 23px; border-radius: 6px; background: #fff; border: 1.500px solid #d2d2d2; box-shadow: inset 0 1px 1px #ddd; }
.trow .c { padding-right: 2px; }
.blue i { display: block; margin: 4px 0 0 48px; width: 23px; height: 23px; border-radius: 6px; background: #2f74f0; }
.bot { margin-top: 2px; }
.ptrack { height: 25px; background: #fafafa; border-top: 1px solid #e6e6e6; padding: 5px 0 0 2px; }
.ptrack i { width: 84px; height: 13px; }
.vscroll.low { background: #fff; } .low i { width: 13px; height: 29px; margin: 114px 0 0 6px; }
.hier { width: 868px; flex: none; }
.hbar { height: 95px; display: flex; padding: 53px 0 0 1px; align-items: flex-start; }
.hbar .field { width: 462px; height: 34px; margin-top: 1px; }
.btn { height: 36px; background: #fff; border-radius: 9px; box-shadow: 0 1px 2px #bbb; display: flex; align-items: center; gap: 6px; padding-left: 8px; flex: none; }
.prod { width: 147px; margin: 0 15px 0 18px; } .btn.off { width: 42px; background: #f6f6f6; }
.hframe { height: 1321px; border: 2px solid #b3b3b3; display: flex; background: #fff; overflow: hidden; }
.tree { width: 842px; flex: none; padding-left: 1px; }
.trow { display: grid; grid-template-columns: 415px 99px 327px; height: 40.070px; border-bottom: 1px solid #ececec; font-size: 19.500px; letter-spacing: .33px; }
.trow > span { border-right: 1px solid #ececec; }
.thead { height: 29.500px; background: linear-gradient(#fbfbfb, #ececec); border-bottom: 2px solid #b5b5b5; font-size: 17.400px; line-height: 28px; }
.thead > span { padding-left: 5px; border-right: 1px solid #b5b5b5; }
.tname { display: flex; align-items: center; }
.chev { width: 24px; display: flex; justify-content: center; }
.chev path { fill: none; stroke: #b0b0b0; stroke-width: 1.800; }
.tico { padding: 3px; margin: 0 7px 0 2px; }
.stat { display: flex; align-items: center; }
.sbox { display: flex; align-items: center; padding: 2px 2px 2px 3px; margin-left: 2px; height: 28px; }
.br { width: 23px; height: 24px; margin-right: 2.600px; } .ar { width: 24px; height: 20px; margin-right: 1.600px; margin-top: -2px; }
.sel { background: #1f4bd2; color: #fff; border-bottom: 2px solid #b9d5f8; }
.sel .tico, .sel .sbox { background: #fff; }
.bold { font-size: 19px; letter-spacing: 0; }
.bold b { margin-left: 1px; }
.hv { width: 22px; } .hv i { width: 13px; height: 558px; margin: 31px 0 0 6px; }
.side { width: 34px; flex: none; padding-top: 54px; display: flex; flex-direction: column; }
.stab { width: 25px; margin-left: 4px; border-bottom: 2px solid #bcbcbc; display: flex; flex-direction: column; align-items: center; padding-top: 9px; gap: 7px; flex: none; }
.stab .ic { margin-left: 4px; }
.stab span { writing-mode: vertical-rl; line-height: 24px; }
.stab.active { width: 28px; font-weight: 700; border-right: 2px solid #1c4fd0; background: linear-gradient(90deg, #c6d0e4, #93b8f1 40%, #7fbcfa 65%, #b9f2fc); padding-top: 7px; }
.stab.last { margin-top: 94px; padding-top: 0; height: 98px; gap: 6px; }
.tabs { height: 34px; display: flex; align-items: center; padding-left: 6px; padding-bottom: 2px; }
.tab { height: 26px; border-right: 2px solid #c0c0c0; flex: none; }
.tin { display: flex; align-items: center; gap: 6px; height: 26px; padding-left: 22px; }
.tab.active { border: 0; }
.tab.active .tin { width: 231px; padding-left: 17px; font-weight: 700; background: linear-gradient(#c3d0ec, #8db8f3 35%, #72acf4 58%, #b0eefb); border-bottom: 2px solid #2048c8; margin-left: 1px; }
.tab:nth-child(2) .tin { padding-left: 17px; }
.pager { margin-left: 10px; }
.menu { position: absolute; left: 2090px; top: 722px; width: 485px; height: 525px; background: rgba(255, 255, 255, .965); box-shadow: 0 8px 24px rgba(0, 0, 0, .32), 0 0 2px rgba(0, 0, 0, .5); padding-top: 7px; font-size: 22.600px; }
.mi { height: 30.600px; line-height: 30px; padding: 0 15px 0 33px; display: flex; justify-content: space-between; align-items: center; color: #000; }
.mi.off { color: #858585; } .mi.hot { background: #2f6bd3; color: #fff; }
.ms { height: 2px; margin: 7px 2px 10px 1px; background: #d8d8d8; }
.tip { position: absolute; left: 2405px; top: 914px; width: 213px; height: 30px; background: #fdfdcd; border: 1px solid #d5d5b8; box-shadow: 0 4px 14px rgba(0, 0, 0, .22); display: flex; align-items: center; padding-left: 4px; }
.bubbles { position: absolute; left: 0; top: 0; }
.note { position: absolute; font: 48px/66.500px "Liberation Sans", Arial, sans-serif; color: #3a7cb9; text-align: center; white-space: nowrap; font-kerning: none; -webkit-text-stroke: .5px #3a7cb9; }
.note.one { left: 833px; top: 310px; width: 888px; }
.two2 { left: 873px; top: 985px; width: 860px; line-height: 66px; }
</style>
